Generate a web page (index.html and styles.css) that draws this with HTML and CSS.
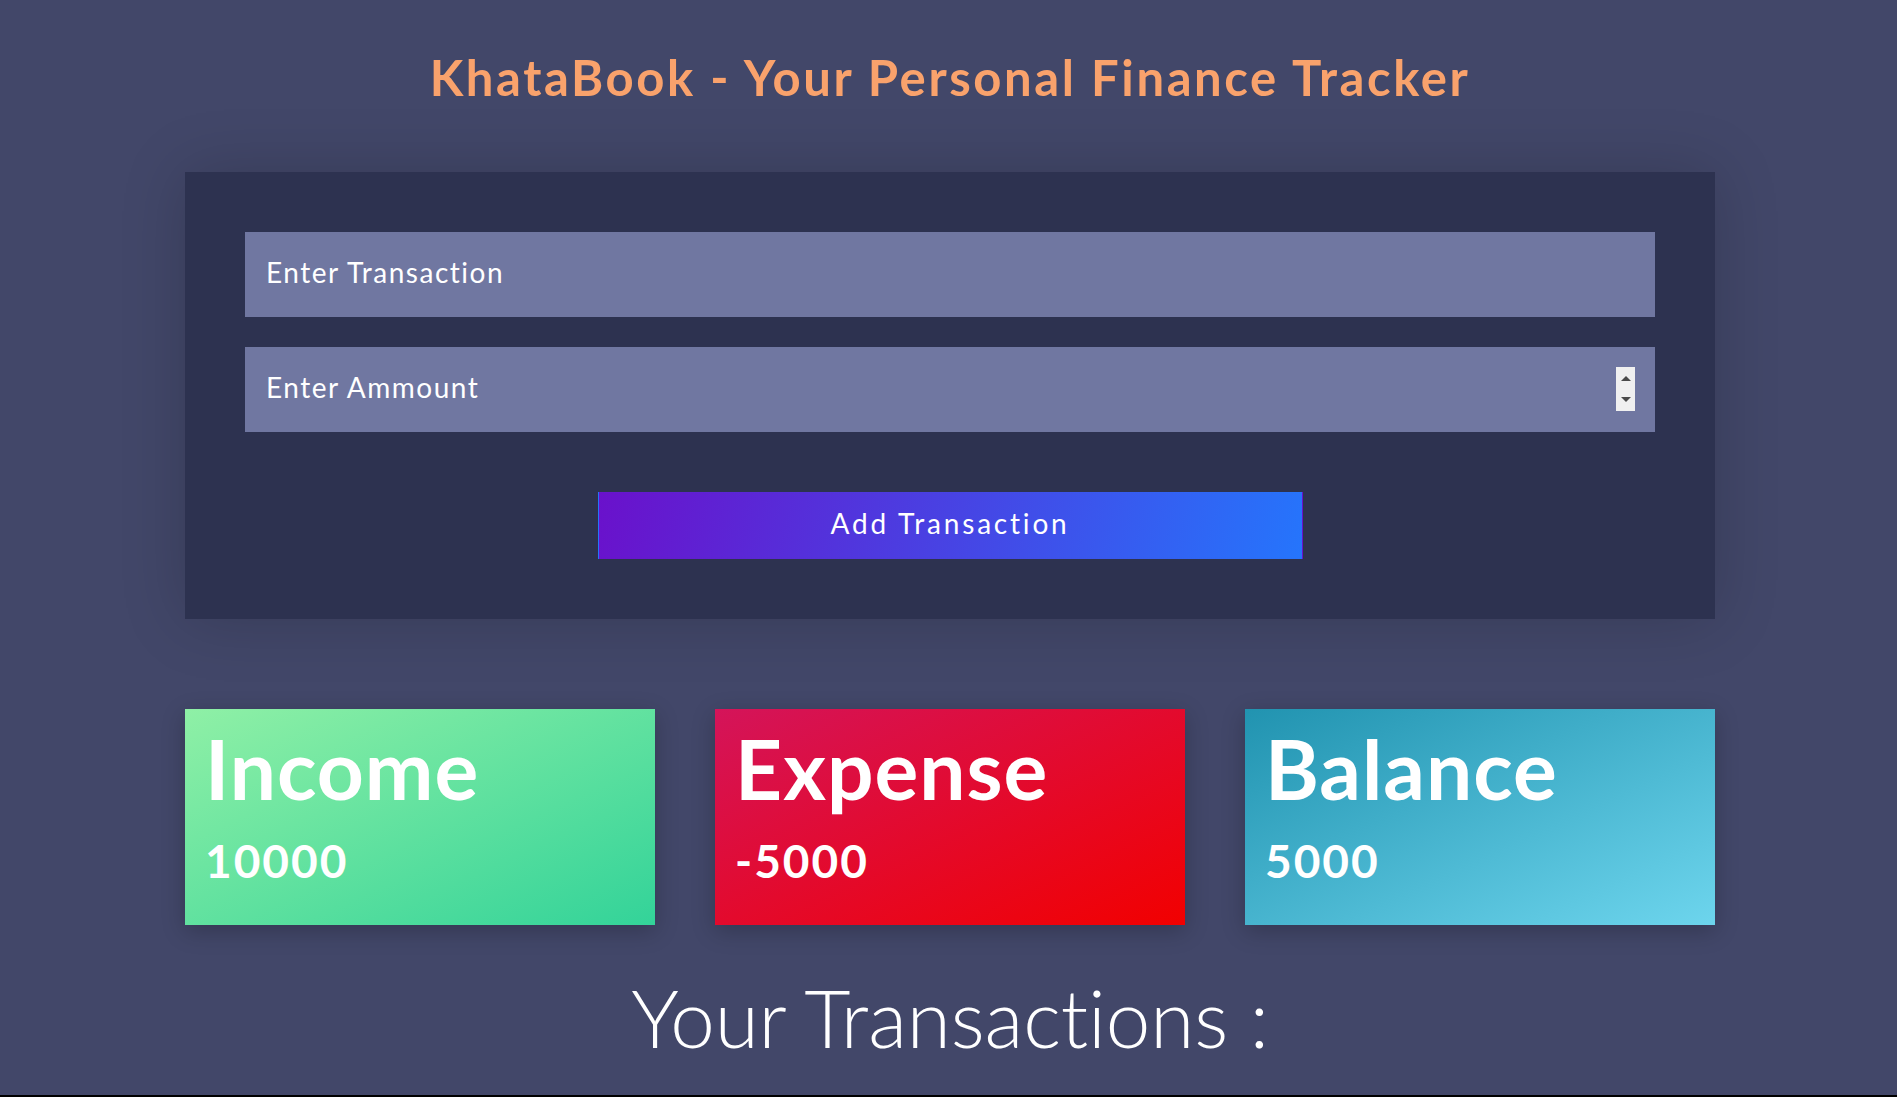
FILE: index.html
```html
<!DOCTYPE html>
<html lang="en">
<head>
<meta charset="UTF-8">
<title>KhataBook</title>
<link rel="stylesheet" href="styles.css">
</head>
<body>
<main class="page">
  <h1 class="title">KhataBook - Your Personal Finance Tracker</h1>

  <section class="form-card">
    <input class="field" type="text" placeholder="Enter Transaction">
    <div class="field-wrap">
      <input class="field" type="number" placeholder="Enter Ammount">
      <span class="spinner" aria-hidden="true">
        <span class="tri up"></span>
        <span class="tri down"></span>
      </span>
    </div>
    <button class="add-btn" type="button">Add Transaction</button>
  </section>

  <section class="stats">
    <div class="stat income">
      <h2 class="stat-title">Income</h2>
      <p class="stat-value">10000</p>
    </div>
    <div class="stat expense">
      <h2 class="stat-title">Expense</h2>
      <p class="stat-value">-5000</p>
    </div>
    <div class="stat balance">
      <h2 class="stat-title">Balance</h2>
      <p class="stat-value">5000</p>
    </div>
  </section>

  <h2 class="list-title">Your Transactions :</h2>
</main>
</body>
</html>
```

FILE: styles.css
```css
html {
  background: #000;
}

body {
  margin: 0;
  min-height: 1095px;
  background: #424769;
  font-family: Lato, "Open Sans", sans-serif;
  color: #fff;
}

.page {
  padding-top: 48px;
  padding-left: 3px;
  display: flex;
  flex-direction: column;
  align-items: center;
}

.title {
  margin: 0 0 65px;
  font-size: 49px;
  line-height: 1.2;
  font-weight: 700;
  color: #f9a26c;
  letter-spacing: 2.6px;
}

.form-card {
  width: 1530px;
  box-sizing: border-box;
  padding: 60px;
  background: #2d3250;
  box-shadow: 0 0 60px rgba(0, 0, 0, 0.18);
  display: flex;
  flex-direction: column;
  align-items: center;
  gap: 30px;
}

.field-wrap {
  position: relative;
  width: 100%;
}

.field {
  display: block;
  width: 100%;
  height: 85px;
  box-sizing: border-box;
  border: none;
  outline: none;
  background: #7077a1;
  padding: 0 21px 4px;
  font-family: inherit;
  font-size: 28px;
  color: #fff;
  letter-spacing: 1.5px;
}

.field::placeholder {
  color: #fff;
  opacity: 1;
}

.field::-webkit-inner-spin-button,
.field::-webkit-outer-spin-button {
  -webkit-appearance: none;
  margin: 0;
}

.spinner {
  position: absolute;
  right: 20px;
  top: 20px;
  width: 19px;
  height: 44px;
  background: #f0f0f0;
  display: flex;
  flex-direction: column;
  align-items: center;
  justify-content: space-between;
  padding: 9px 0;
  box-sizing: border-box;
}

.tri {
  width: 0;
  height: 0;
  border-left: 5px solid transparent;
  border-right: 5px solid transparent;
}

.tri.up {
  border-bottom: 5px solid #4a4a4a;
}

.tri.down {
  border-top: 5px solid #4a4a4a;
}

.add-btn {
  margin-top: 30px;
  width: 705px;
  height: 67px;
  border: 1px solid transparent;
  background: linear-gradient(105deg, #6a11cb, #2575fc);
  color: #fff;
  font-family: inherit;
  font-size: 28px;
  letter-spacing: 2.8px;
  padding: 0 0 4px;
  cursor: pointer;
}

.stats {
  margin-top: 90px;
  width: 1530px;
  display: grid;
  grid-template-columns: repeat(3, 1fr);
  gap: 60px;
}

.stat {
  height: 216px;
  box-sizing: border-box;
  padding: 18px 20px 0;
  box-shadow: 0 6px 22px rgba(0, 0, 0, 0.22);
}

.income {
  background: linear-gradient(to bottom right, #8ff0a6, #33d399);
}

.expense {
  background: linear-gradient(to bottom right, #d4145a, #f20000);
}

.balance {
  background: linear-gradient(to bottom right, #2193b0, #6dd5ed);
}

.stat-title {
  margin: 0;
  font-size: 82px;
  line-height: 1;
  font-weight: 700;
  letter-spacing: 1px;
}

.stat-value {
  margin: 29px 0 0;
  font-size: 46px;
  line-height: 1;
  font-weight: 700;
  letter-spacing: 2px;
}

.list-title {
  margin: 52px 0 0;
  font-size: 80px;
  line-height: 1;
  font-weight: 300;
  letter-spacing: -0.1px;
}
```
